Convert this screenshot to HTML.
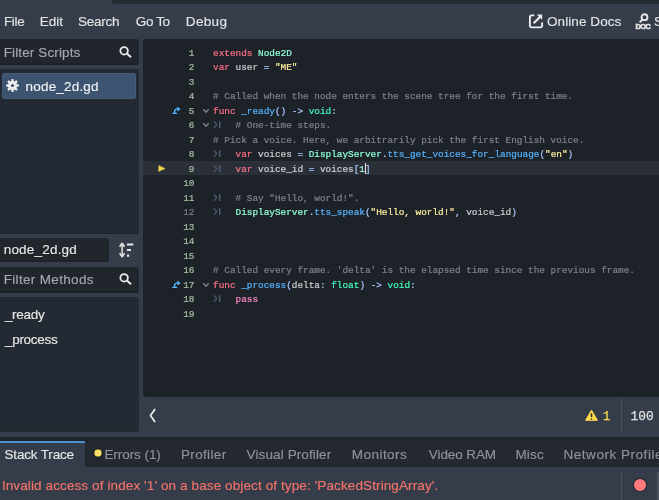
<!DOCTYPE html>
<html><head><meta charset="utf-8">
<style>
*{margin:0;padding:0;box-sizing:border-box}
html,body{width:659px;height:500px;overflow:hidden;background:#363d4a;font-family:"Liberation Sans",sans-serif;color:#e0e0e0}
.a{position:absolute}
.t{position:absolute;white-space:nowrap;font-size:13.5px;line-height:20px;-webkit-text-stroke-width:0.15px}
.topstrip{left:112px;top:0;width:547px;height:4px;background:#262b33;border-bottom-left-radius:3px}
.menu{top:12px;color:#e2e3e5}
.panel{background:#242a33;box-shadow:inset 0 -1px 0 #20252c}
.edit{background:#21262d;box-shadow:inset 0 -1.5px 0 #1c2026}
.code{left:143px;top:39px;width:516px;height:358px;background:#1d2229;border-radius:3px 0 0 4px;overflow:hidden}
.cl{position:absolute;left:70px;-webkit-text-stroke-width:0.2px;height:14.5px;line-height:14.5px;font-family:"Liberation Mono",monospace;font-size:9.38px;white-space:pre}
.ln{position:absolute;left:0;width:51.5px;-webkit-text-stroke-width:0.2px;text-align:right;height:14.5px;line-height:14.5px;font-family:"Liberation Mono",monospace;font-size:9.38px;color:#a5bfa3}
.tabm{position:absolute;left:70px}
.fold{position:absolute;left:59.3px}
.ovr{position:absolute;left:25px}
.curline{position:absolute;left:0;top:121.6px;width:516px;height:14.6px;background:#2b3038}
</style></head><body><div id="root" style="position:absolute;left:0;top:0;width:659px;height:500px;will-change:transform;background:#363d4a">
<div class="a topstrip"></div>
<div class="t menu" style="left:3.9px;letter-spacing:-0.33px">File</div>
<div class="t menu" style="left:39.7px">Edit</div>
<div class="t menu" style="left:78px;letter-spacing:-0.24px">Search</div>
<div class="t menu" style="left:135.8px;letter-spacing:-0.37px">Go To</div>
<div class="t menu" style="left:185.8px;letter-spacing:0.33px">Debug</div>

<!-- online docs -->
<svg class="a" style="left:528px;top:13px" width="16" height="16" viewBox="0 0 16 16">
 <path d="M6.3 2.4 H3.7 Q1.9 2.4 1.9 4.2 V12.6 Q1.9 14.4 3.7 14.4 H12.3 Q14.1 14.4 14.1 12.6 V9.4" fill="none" stroke="#ececec" stroke-width="1.9"/>
 <path d="M5.6 10.3 L12.2 3.7" stroke="#ececec" stroke-width="2.2"/>
 <path d="M8.7 1.4 H14.1 V6.8 Z" fill="#ececec"/>
</svg>
<div class="t menu" style="left:547px;letter-spacing:0.08px">Online Docs</div>
<svg class="a" style="left:635px;top:12px" width="17" height="18" viewBox="0 0 17 18">
 <circle cx="9.5" cy="5.2" r="2.95" fill="none" stroke="#e6e6e6" stroke-width="1.9"/>
 <path d="M7.3 7.6 L4.7 10.3" stroke="#e6e6e6" stroke-width="2"/>
 <text x="0.6" y="16.7" font-family="Liberation Sans" font-weight="bold" font-size="7.7" letter-spacing="-0.9" fill="#e6e6e6" stroke="#e6e6e6" stroke-width="0.55">DOC</text>
</svg>
<div class="t menu" style="left:654px">S</div>

<!-- left panel -->
<div class="a edit" style="left:0;top:39px;width:139px;height:26px;border-radius:0 3px 3px 0"></div>
<div class="t" style="left:3.7px;top:43px;color:#a5a8ad;letter-spacing:0.12px">Filter Scripts</div>
<svg class="a" style="left:119px;top:45.5px" width="14" height="12" viewBox="0 0 14 12"><circle cx="5.1" cy="4.8" r="3.75" fill="none" stroke="#ebebeb" stroke-width="1.8"/><path d="M7.9 7.5 L12 11.2" stroke="#ebebeb" stroke-width="2"/></svg>

<div class="a panel" style="left:0;top:68.8px;width:139px;height:164.8px;border-radius:0 3px 3px 0"></div>
<div class="a" style="left:2px;top:73px;width:134px;height:26px;background:#3c5470;border-radius:3px;box-shadow:inset 0 0 0 1px #435c78"></div>
<svg class="a" style="left:6px;top:79.4px" width="13" height="13" viewBox="0 0 13 13">
 <g fill="#ededed" transform="translate(6.5 6.5)">
  <circle r="4.5"/>
  <rect x="-1.15" y="-6.4" width="2.3" height="12.8" rx="0.6"/>
  <rect x="-1.15" y="-6.4" width="2.3" height="12.8" rx="0.6" transform="rotate(45)"/>
  <rect x="-1.15" y="-6.4" width="2.3" height="12.8" rx="0.6" transform="rotate(90)"/>
  <rect x="-1.15" y="-6.4" width="2.3" height="12.8" rx="0.6" transform="rotate(135)"/>
 </g>
 <circle cx="6.5" cy="6.5" r="1.6" fill="#3c5470"/>
</svg>
<div class="t" style="left:25.6px;top:77px;color:#f2f2f2;letter-spacing:0.18px">node_2d.gd</div>

<div class="a edit" style="left:0;top:238px;width:109px;height:24px;border-radius:0 3px 3px 0"></div>
<div class="t" style="left:3.7px;top:240px;color:#e6e6e6;letter-spacing:0.2px">node_2d.gd</div>
<svg class="a" style="left:119px;top:242px" width="16" height="16" viewBox="0 0 16 16">
 <path d="M3.1 2 V14" stroke="#e6e6e6" stroke-width="1.5"/>
 <path d="M0.6 4.7 L3.1 1.2 L5.6 4.7" fill="none" stroke="#e6e6e6" stroke-width="1.5" stroke-linejoin="round"/>
 <path d="M0.6 11.3 L3.1 14.8 L5.6 11.3" fill="none" stroke="#e6e6e6" stroke-width="1.5" stroke-linejoin="round"/>
 <rect x="7.9" y="1.4" width="6.4" height="2.2" rx="0.4" fill="#e6e6e6"/>
 <rect x="7.9" y="6.9" width="4.1" height="2.2" rx="0.4" fill="#e6e6e6"/>
 <rect x="7.9" y="12.6" width="2.3" height="2.2" rx="0.4" fill="#e6e6e6"/>
</svg>

<div class="a edit" style="left:0;top:266.5px;width:139px;height:26px;border-radius:0 3px 3px 0"></div>
<div class="t" style="left:3.7px;top:270px;color:#a5a8ad;letter-spacing:0.33px">Filter Methods</div>
<svg class="a" style="left:119px;top:272.5px" width="14" height="12" viewBox="0 0 14 12"><circle cx="5.1" cy="4.8" r="3.75" fill="none" stroke="#ebebeb" stroke-width="1.8"/><path d="M7.9 7.5 L12 11.2" stroke="#ebebeb" stroke-width="2"/></svg>

<div class="a panel" style="left:0;top:297px;width:139px;height:135px;border-radius:0 3px 3px 0"></div>
<div class="t" style="left:4.9px;top:304.5px;color:#e6e6e6;letter-spacing:-0.28px">_ready</div>
<div class="t" style="left:4.9px;top:330.3px;color:#e6e6e6;letter-spacing:-0.26px">_process</div>

<!-- code editor -->
<div class="a code">
 <div class="curline"></div>
 <div class="ln" style="top:7.75px">1</div>
<div class="ln" style="top:22.25px">2</div>
<div class="ln" style="top:36.75px">3</div>
<div class="ln" style="top:51.25px">4</div>
<div class="ln" style="top:65.75px">5</div>
<svg class="fold" style="top:68.60px" width="8" height="6" viewBox="0 0 8 6"><path d="M1.3 1.2 L4 4.2 L6.7 1.2" fill="none" stroke="#7e8288" stroke-width="1.45"/></svg>
<svg class="ovr" style="top:64.00px" width="16" height="14" viewBox="0 0 16 14"><g stroke="#14171c" stroke-width="1" opacity="0.8"><path d="M3.8 10.4 H9.6 M6.6 10.4 V8.2 Q6.8 6.4 8.8 6.1" fill="none" stroke-width="3"/><path d="M9.1 3.7 L12.6 6.1 L9.7 8.4 Z" fill="#14171c" stroke-width="1.6" stroke-linejoin="round"/></g><path d="M4.2 10.4 H9.2" stroke="#5cb8ff" stroke-width="1.3"/><path d="M6.6 10.4 V8.2 Q6.8 6.4 8.8 6.1" fill="none" stroke="#5cb8ff" stroke-width="1.5"/><path d="M9.1 3.9 L12.4 6.1 L9.7 8.2 Z" fill="#5cb8ff" stroke="#5cb8ff" stroke-width="0.5" stroke-linejoin="round"/></svg>
<div class="ln" style="top:80.25px">6</div>
<svg class="tabm" style="top:81.30px" width="9" height="9" viewBox="0 0 9 9"><path d="M0.9 1.3 L3.7 4.6 L0.9 7.9" fill="none" stroke="#4b5870" stroke-width="1.3"/><path d="M6.7 1.3 V7.9" stroke="#52627a" stroke-width="1.35"/></svg>
<svg class="fold" style="top:83.10px" width="8" height="6" viewBox="0 0 8 6"><path d="M1.3 1.2 L4 4.2 L6.7 1.2" fill="none" stroke="#7e8288" stroke-width="1.45"/></svg>
<div class="ln" style="top:94.75px">7</div>
<div class="ln" style="top:109.25px">8</div>
<svg class="tabm" style="top:110.30px" width="9" height="9" viewBox="0 0 9 9"><path d="M0.9 1.3 L3.7 4.6 L0.9 7.9" fill="none" stroke="#4b5870" stroke-width="1.3"/><path d="M6.7 1.3 V7.9" stroke="#52627a" stroke-width="1.35"/></svg>
<div class="ln" style="top:123.75px">9</div>
<svg class="tabm" style="top:124.80px" width="9" height="9" viewBox="0 0 9 9"><path d="M0.9 1.3 L3.7 4.6 L0.9 7.9" fill="none" stroke="#4b5870" stroke-width="1.3"/><path d="M6.7 1.3 V7.9" stroke="#52627a" stroke-width="1.35"/></svg>
<div class="ln" style="top:138.25px">10</div>
<div class="ln" style="top:152.75px">11</div>
<svg class="tabm" style="top:153.80px" width="9" height="9" viewBox="0 0 9 9"><path d="M0.9 1.3 L3.7 4.6 L0.9 7.9" fill="none" stroke="#4b5870" stroke-width="1.3"/><path d="M6.7 1.3 V7.9" stroke="#52627a" stroke-width="1.35"/></svg>
<div class="ln" style="top:167.25px;color:#7b7e84">12</div>
<svg class="tabm" style="top:168.30px" width="9" height="9" viewBox="0 0 9 9"><path d="M0.9 1.3 L3.7 4.6 L0.9 7.9" fill="none" stroke="#4b5870" stroke-width="1.3"/><path d="M6.7 1.3 V7.9" stroke="#52627a" stroke-width="1.35"/></svg>
<div class="ln" style="top:181.75px">13</div>
<div class="ln" style="top:196.25px">14</div>
<div class="ln" style="top:210.75px">15</div>
<div class="ln" style="top:225.25px">16</div>
<div class="ln" style="top:239.75px">17</div>
<svg class="fold" style="top:242.60px" width="8" height="6" viewBox="0 0 8 6"><path d="M1.3 1.2 L4 4.2 L6.7 1.2" fill="none" stroke="#7e8288" stroke-width="1.45"/></svg>
<svg class="ovr" style="top:238.00px" width="16" height="14" viewBox="0 0 16 14"><g stroke="#14171c" stroke-width="1" opacity="0.8"><path d="M3.8 10.4 H9.6 M6.6 10.4 V8.2 Q6.8 6.4 8.8 6.1" fill="none" stroke-width="3"/><path d="M9.1 3.7 L12.6 6.1 L9.7 8.4 Z" fill="#14171c" stroke-width="1.6" stroke-linejoin="round"/></g><path d="M4.2 10.4 H9.2" stroke="#5cb8ff" stroke-width="1.3"/><path d="M6.6 10.4 V8.2 Q6.8 6.4 8.8 6.1" fill="none" stroke="#5cb8ff" stroke-width="1.5"/><path d="M9.1 3.9 L12.4 6.1 L9.7 8.2 Z" fill="#5cb8ff" stroke="#5cb8ff" stroke-width="0.5" stroke-linejoin="round"/></svg>
<div class="ln" style="top:254.25px">18</div>
<svg class="tabm" style="top:255.30px" width="9" height="9" viewBox="0 0 9 9"><path d="M0.9 1.3 L3.7 4.6 L0.9 7.9" fill="none" stroke="#4b5870" stroke-width="1.3"/><path d="M6.7 1.3 V7.9" stroke="#52627a" stroke-width="1.35"/></svg>
<div class="ln" style="top:268.75px">19</div>
 <div class="cl" style="top:7.75px"><span style="color:#ff7085">extends</span><span style="color:#cdcfd2"> </span><span style="color:#8fffdb">Node2D</span></div>
<div class="cl" style="top:22.25px"><span style="color:#ff7085">var</span><span style="color:#cdcfd2"> user </span><span style="color:#abc9ff">=</span><span style="color:#cdcfd2"> </span><span style="color:#ffeda1">&quot;ME&quot;</span></div>
<div class="cl" style="top:36.75px"></div>
<div class="cl" style="top:51.25px"><span style="color:#7f8287"># Called when the node enters the scene tree for the first time.</span></div>
<div class="cl" style="top:65.75px"><span style="color:#ff7085">func</span><span style="color:#cdcfd2"> </span><span style="color:#57b3ff">_ready</span><span style="color:#abc9ff">()</span><span style="color:#cdcfd2"> </span><span style="color:#abc9ff">-&gt;</span><span style="color:#cdcfd2"> </span><span style="color:#42ffc2">void</span><span style="color:#abc9ff">:</span></div>
<div class="cl" style="top:80.25px"><span style="color:#cdcfd2">    </span><span style="color:#7f8287"># One-time steps.</span></div>
<div class="cl" style="top:94.75px"><span style="color:#7f8287"># Pick a voice. Here, we arbitrarily pick the first English voice.</span></div>
<div class="cl" style="top:109.25px"><span style="color:#cdcfd2">    </span><span style="color:#ff7085">var</span><span style="color:#cdcfd2"> voices </span><span style="color:#abc9ff">=</span><span style="color:#cdcfd2"> </span><span style="color:#8fffdb">DisplayServer</span><span style="color:#abc9ff">.</span><span style="color:#57b3ff">tts_get_voices_for_language</span><span style="color:#abc9ff">(</span><span style="color:#ffeda1">&quot;en&quot;</span><span style="color:#abc9ff">)</span></div>
<div class="cl" style="top:123.75px"><span style="color:#cdcfd2">    </span><span style="color:#ff7085">var</span><span style="color:#cdcfd2"> voice_id </span><span style="color:#abc9ff">=</span><span style="color:#cdcfd2"> voices</span><span style="color:#abc9ff">[</span><span style="color:#a1ffe0">1</span><span style="color:#abc9ff">]</span></div>
<div class="cl" style="top:138.25px"></div>
<div class="cl" style="top:152.75px"><span style="color:#cdcfd2">    </span><span style="color:#7f8287"># Say &quot;Hello, world!&quot;.</span></div>
<div class="cl" style="top:167.25px"><span style="color:#cdcfd2">    </span><span style="color:#8fffdb">DisplayServer</span><span style="color:#abc9ff">.</span><span style="color:#57b3ff">tts_speak</span><span style="color:#abc9ff">(</span><span style="color:#ffeda1">&quot;Hello, world!&quot;</span><span style="color:#abc9ff">,</span><span style="color:#cdcfd2"> voice_id</span><span style="color:#abc9ff">)</span></div>
<div class="cl" style="top:181.75px"></div>
<div class="cl" style="top:196.25px"></div>
<div class="cl" style="top:210.75px"></div>
<div class="cl" style="top:225.25px"><span style="color:#7f8287"># Called every frame. &#x27;delta&#x27; is the elapsed time since the previous frame.</span></div>
<div class="cl" style="top:239.75px"><span style="color:#ff7085">func</span><span style="color:#cdcfd2"> </span><span style="color:#57b3ff">_process</span><span style="color:#abc9ff">(</span><span style="color:#cdcfd2">delta</span><span style="color:#abc9ff">:</span><span style="color:#cdcfd2"> </span><span style="color:#42ffc2">float</span><span style="color:#abc9ff">)</span><span style="color:#cdcfd2"> </span><span style="color:#abc9ff">-&gt;</span><span style="color:#cdcfd2"> </span><span style="color:#42ffc2">void</span><span style="color:#abc9ff">:</span></div>
<div class="cl" style="top:254.25px"><span style="color:#cdcfd2">    </span><span style="color:#ff8ccc">pass</span></div>
<div class="cl" style="top:268.75px"></div>
 <svg class="a" style="left:14.5px;top:125.5px" width="9" height="8" viewBox="0 0 9 8"><path d="M0.7 0.6 L7.1 3.5 L0.7 6.4 Z" fill="#ecd24e" stroke="#ecd24e" stroke-width="0.5" stroke-linejoin="round"/></svg>
 <div class="a" style="left:222.2px;top:124px;width:1.1px;height:10.5px;background:#e8e8e8"></div>
</div>

<!-- status bar -->
<svg class="a" style="left:149px;top:408px" width="8" height="15" viewBox="0 0 8 15"><path d="M5.7 1.5 L1.5 7.5 L5.7 13.5" fill="none" stroke="#ececec" stroke-width="1.7" stroke-linecap="round" stroke-linejoin="round"/></svg>
<svg class="a" style="left:585px;top:409px" width="14" height="13" viewBox="0 0 14 13"><path d="M6.5 1.2 L12.4 11.3 H0.6 Z" fill="#ffd84f" stroke="#ffd84f" stroke-width="1" stroke-linejoin="round"/><path d="M6.5 4.3 V8.1" stroke="#2a2a2a" stroke-width="1.5"/><circle cx="6.5" cy="10" r="0.85" fill="#2a2a2a"/></svg>
<div class="t" style="left:603px;top:407px;color:#ffd84f;font-family:'Liberation Mono',monospace;font-size:12px;-webkit-text-stroke-width:0.25px">1</div>
<div class="a" style="left:621px;top:399px;width:1px;height:33px;background:#4a505c"></div>
<div class="t" style="left:630.6px;top:407px;color:#e0e0e0;font-family:'Liberation Mono',monospace;font-size:12.8px;-webkit-text-stroke-width:0.25px">100</div>

<!-- bottom tabs -->
<div class="a" style="left:0;top:437px;width:659px;height:29.5px;background:#1f232a"></div>
<div class="a" style="left:85px;top:441px;width:574px;height:25.5px;background:#242930"></div>
<div class="a" style="left:0;top:441px;width:84.6px;height:26px;background:#363d4a"></div>
<div class="a" style="left:0;top:440.8px;width:84.6px;height:2.2px;background:#4a94d6;border-top-right-radius:1px"></div>
<div class="t" style="left:4.5px;top:445px;color:#e6e6e6;letter-spacing:-0.17px">Stack Trace</div>
<svg class="a" style="left:93px;top:448px" width="10" height="10" viewBox="0 0 10 10"><circle cx="5" cy="5" r="4.1" fill="#ffe066" stroke="#161a20" stroke-width="1"/></svg>
<div class="t" style="left:104.4px;top:445px;color:#8f9398;letter-spacing:-0.06px">Errors (1)</div>
<div class="t" style="left:181px;top:445px;color:#8f9398;letter-spacing:0.34px">Profiler</div>
<div class="t" style="left:246.6px;top:445px;color:#8f9398;letter-spacing:0.11px">Visual Profiler</div>
<div class="t" style="left:351.8px;top:445px;color:#8f9398;letter-spacing:0.46px">Monitors</div>
<div class="t" style="left:428.8px;top:445px;color:#8f9398;letter-spacing:-0.09px">Video RAM</div>
<div class="t" style="left:515.4px;top:445px;color:#8f9398;letter-spacing:0.17px">Misc</div>
<div class="t" style="left:563.5px;top:445px;color:#8f9398;letter-spacing:0.53px">Network Profiler</div>

<!-- error -->
<div class="t" style="left:1.9px;top:476px;color:#f57369;letter-spacing:0.11px">Invalid access of index '1' on a base object of type: 'PackedStringArray'.</div>
<div class="a" style="left:621px;top:472px;width:1px;height:28px;background:#4a505c"></div>
<div class="a" style="left:633.9px;top:478.9px;width:11.7px;height:11.7px;border-radius:50%;background:#ff7b7b;box-shadow:0 0 0 1.1px #1f2a35"></div>
<div class="a" style="left:657px;top:472px;width:2px;height:28px;background:#4a505c"></div>
</div></body></html>
